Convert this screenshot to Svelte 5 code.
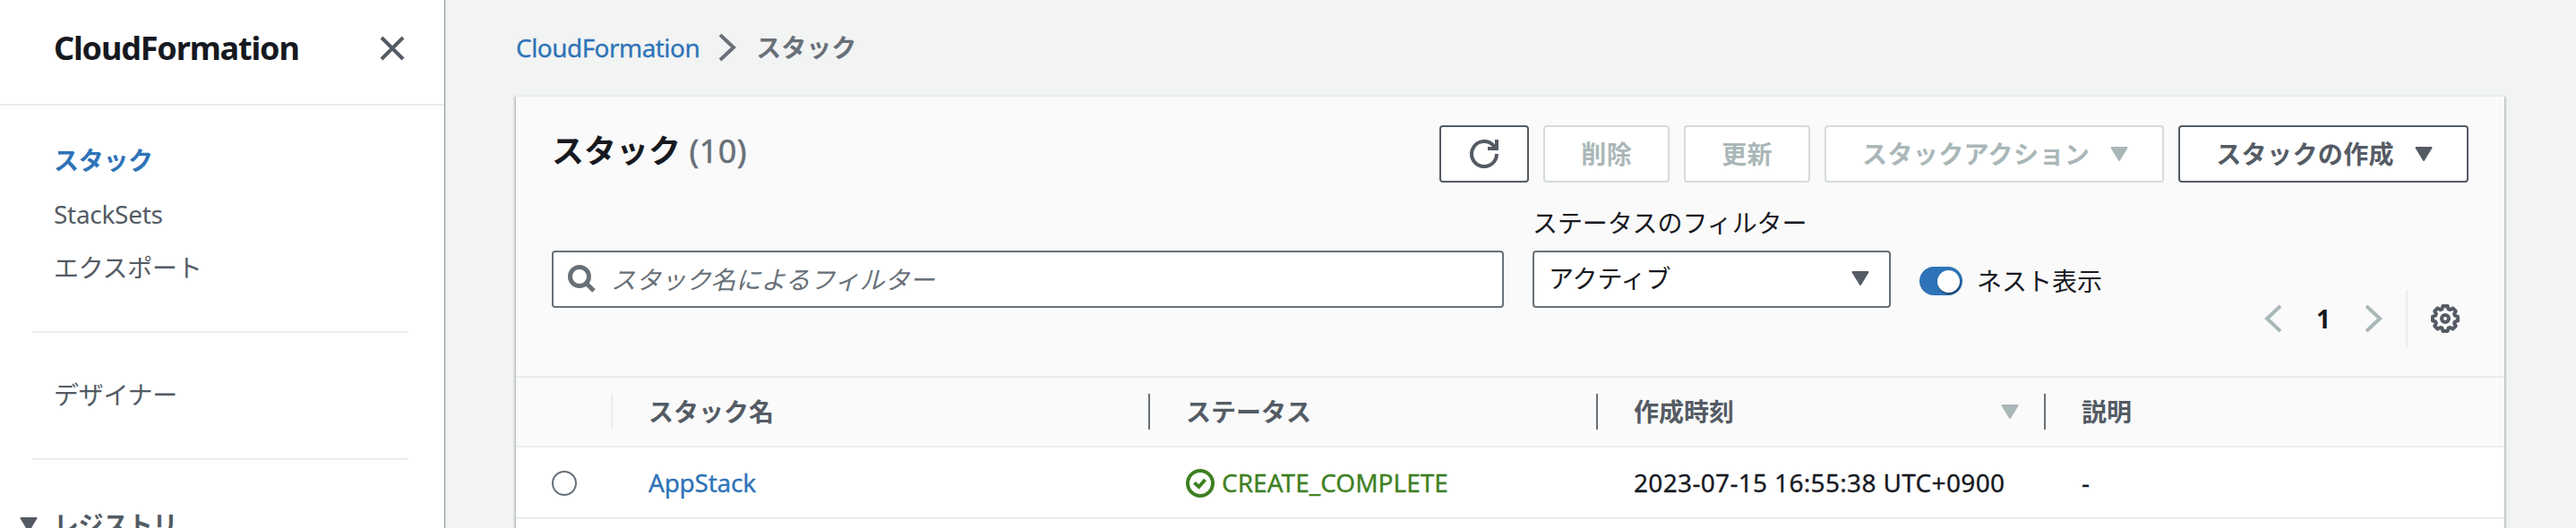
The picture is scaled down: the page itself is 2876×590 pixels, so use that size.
<script>
  let nested = true;
  let filterText = "";

  const navLinks = [
    { label: "スタック", active: true },
    { label: "StackSets" },
    { label: "エクスポート" },
  ];

  const stacks = [
    {
      name: "AppStack",
      status: "CREATE_COMPLETE",
      created: "2023-07-15 16:55:38 UTC+0900",
      description: "-",
    },
  ];
</script>

{#snippet caret()}
  <svg class="caret" viewBox="0 0 20 16">
    <path d="M1.5 1h17L10 15z" />
  </svg>
{/snippet}

<div class="page">
  <aside>
    <header>
      <h1>CloudFormation</h1>
      <svg class="close" viewBox="0 0 28 28">
        <path d="M2 2l24 24M26 2L2 26" />
      </svg>
    </header>
    <nav>
      {#each navLinks as link}
        <a href="#top" class:active={link.active}>{link.label}</a>
      {/each}
      <hr />
      <a href="#top">デザイナー</a>
      <hr />
      <div class="group">
        {@render caret()}
        <span>レジストリ</span>
      </div>
    </nav>
  </aside>

  <main>
    <div class="breadcrumb">
      <a href="#top">CloudFormation</a>
      <svg viewBox="0 0 20 32">
        <path d="M2 2l15 14L2 30" />
      </svg>
      <span>スタック</span>
    </div>

    <section>
      <div class="titlebar">
        <h2>スタック <span>(10)</span></h2>
        <div class="actions">
          <button class="refresh" aria-label="refresh">
            <svg viewBox="0 0 32 32">
              <path d="M30 16a14 14 0 1 1-3.500-9.200L29 10" />
              <path d="M30 0v10H20" />
            </svg>
          </button>
          <button disabled>削除</button>
          <button disabled>更新</button>
          <button class="menu" disabled>スタックアクション {@render caret()}</button>
          <button class="menu">スタックの作成 {@render caret()}</button>
        </div>
      </div>

      <div class="filters">
        <div class="search">
          <svg viewBox="0 0 32 32">
            <circle cx="13" cy="13" r="10.500" />
            <path d="M20.500 20.500L29 29" />
          </svg>
          <input bind:value={filterText} placeholder="スタック名によるフィルター" />
        </div>
        <div class="status-filter">
          <span>ステータスのフィルター</span>
          <div class="select">アクティブ {@render caret()}</div>
        </div>
        <button
          class="toggle"
          class:on={nested}
          aria-label="nested"
          on:click={() => (nested = !nested)}
        >
          <i></i>
        </button>
        <span class="toggle-label">ネスト表示</span>
        <div class="pagination">
          <svg class="arrow" viewBox="0 0 20 32">
            <path d="M18 2L3 16l15 14" />
          </svg>
          <b>1</b>
          <svg class="arrow" viewBox="0 0 20 32">
            <path d="M2 2l15 14L2 30" />
          </svg>
          <div class="settings">
            <svg viewBox="0 0 32 32">
              <path
                d="M13.400 2h5.200l.9 3.300 2 .8 3-1.700 3.300 3.300-1.700 3 .8 2 3.100.9v4.800l-3.100.9-.8 2 1.700 3-3.300 3.300-3-1.700-2 .8-.9 3.300h-5.200l-.9-3.300-2-.8-3 1.700-3.300-3.300 1.700-3-.8-2-3.100-.9v-4.800l3.100-.9.8-2-1.700-3 3.300-3.300 3 1.700 2-.8z"
              />
              <circle cx="16" cy="16" r="4" />
            </svg>
          </div>
        </div>
      </div>

      <div class="row head">
        <div class="cell"></div>
        <div class="cell">スタック名</div>
        <div class="cell">ステータス</div>
        <div class="cell sorted">作成時刻 {@render caret()}</div>
        <div class="cell">説明</div>
      </div>
      {#each stacks as stack}
        <div class="row">
          <div class="cell"><i class="radio"></i></div>
          <div class="cell"><a class="name" href="#top">{stack.name}</a></div>
          <div class="cell status">
            <svg viewBox="0 0 32 32">
              <circle cx="16" cy="16" r="14" />
              <path d="M9.500 15.500l5 4.500 7-8" />
            </svg>
            <span>{stack.status}</span>
          </div>
          <div class="cell created">{stack.created}</div>
          <div class="cell">{stack.description}</div>
        </div>
      {/each}
    </section>
  </main>
</div>

<style>
  :global(body) {
    margin: 0;
    overflow: hidden;
  }

  .page {
    display: flex;
    height: 590px;
    overflow: hidden;
    background: #f2f3f3;
    color: #16191f;
    font-family: "Noto Sans", "Noto Sans CJK JP", sans-serif;
    font-size: 28px;
    line-height: 40px;
  }

  .page * {
    box-sizing: border-box;
  }

  a {
    color: #2e73b8;
    text-decoration: none;
  }

  svg {
    display: block;
    flex: none;
    fill: none;
    stroke: #545b64;
    stroke-width: 4;
  }

  .caret {
    width: 20px;
    height: 16px;
    fill: #545b64;
    stroke-width: 2;
    stroke-linejoin: round;
  }

  aside {
    position: relative;
    width: 496px;
    flex: none;
    background: #fff;
    box-shadow: 1px 0 1px rgba(0, 28, 36, 0.4);
  }

  header {
    display: flex;
    justify-content: space-between;
    align-items: center;
    height: 118px;
    padding: 0 44px 8px 60px;
    border-bottom: 2px solid #eaeded;
  }

  h1 {
    margin: 0;
    font-size: 36px;
    letter-spacing: -1.15px;
  }

  .close {
    width: 28px;
    height: 28px;
  }

  nav {
    padding: 41px 40px 0 36px;
  }

  nav a {
    display: block;
    height: 60px;
    padding: 0 24px;
    line-height: 40px;
    letter-spacing: -0.3px;
    color: #545b64;
  }

  nav a.active {
    color: #2e73b8;
    font-weight: bold;
  }

  hr {
    height: 2px;
    margin: 31px 0 49px;
    border: 0;
    background: #eaeded;
  }

  .group {
    display: flex;
    align-items: center;
    margin: 52px 0 0 -14px;
    gap: 18px;
    font-weight: bold;
    letter-spacing: -0.4px;
    color: #545b64;
  }

  main {
    padding-left: 80px;
  }

  .breadcrumb {
    display: flex;
    align-items: center;
    height: 106px;
  }

  .breadcrumb a {
    letter-spacing: -0.55px;
    -webkit-text-stroke: 0.3px;
  }

  .breadcrumb svg {
    width: 20px;
    height: 32px;
    margin: 0 22px 0 21px;
    stroke: #687078;
  }

  .breadcrumb span {
    color: #687078;
    font-weight: bold;
  }

  section {
    width: 2220px;
    height: 500px;
    background: #fff;
    border-top: 2px solid #eaeded;
    box-shadow:
      0 2px 2px rgba(0, 28, 36, 0.3),
      2px 2px 2px rgba(0, 28, 36, 0.15),
      -2px 2px 2px rgba(0, 28, 36, 0.15);
  }

  .titlebar {
    display: flex;
    justify-content: space-between;
    height: 112px;
    padding: 32px 40px 0;
    background: #fafafa;
  }

  h2 {
    margin: 0;
    font-size: 36px;
    line-height: 58px;
  }

  h2 span {
    color: #687078;
    font-weight: normal;
    letter-spacing: 0.5px;
    -webkit-text-stroke: 0.5px;
  }

  .actions {
    display: flex;
    gap: 16px;
  }

  .actions button {
    display: flex;
    align-items: center;
    justify-content: space-between;
    height: 64px;
    padding: 0 40px;
    border: 2px solid #545b64;
    border-radius: 4px;
    background: #fff;
    color: #545b64;
    font: inherit;
    font-weight: bold;
    letter-spacing: 0.4px;
  }

  .actions .menu {
    gap: 23px;
    padding-right: 38px;
  }

  .actions button:disabled {
    border-color: #d5dbdb;
    color: #aab7b8;
  }

  .actions button:disabled .caret {
    fill: #aab7b8;
    stroke: #aab7b8;
  }

  .actions .refresh {
    padding: 0 32px;
  }

  .refresh svg {
    width: 32px;
    height: 32px;
  }

  .filters {
    display: flex;
    align-items: flex-end;
    height: 200px;
    padding: 0 40px 76px;
    background: #fafafa;
  }

  .search {
    display: flex;
    align-items: center;
    width: 1063px;
    height: 64px;
    padding: 0 16px;
    border: 2px solid #687078;
    border-radius: 4px;
    background: #fff;
  }

  .search svg {
    width: 32px;
    height: 32px;
    stroke: #687078;
    stroke-width: 5;
  }

  .search input {
    flex: 1;
    padding: 0 16px;
    border: 0;
    outline: 0;
    background: none;
    font: inherit;
    letter-spacing: -0.1px;
  }

  .search input::placeholder {
    color: #687078;
    font-style: italic;
    opacity: 1;
  }

  .status-filter {
    width: 400px;
    margin-left: 32px;
    letter-spacing: -0.1px;
  }

  .select {
    display: flex;
    align-items: center;
    justify-content: space-between;
    height: 64px;
    margin-top: 11px;
    padding: 0 22px 2px 16px;
    border: 2px solid #687078;
    border-radius: 4px;
    background: #fff;
  }

  .toggle {
    width: 48px;
    height: 32px;
    margin: 0 16px 14px 32px;
    padding: 3px;
    border: 0;
    border-radius: 16px;
    background: #687078;
  }

  .toggle.on {
    padding-left: 20px;
    background: #2e73b8;
  }

  .toggle i {
    display: block;
    width: 25px;
    height: 25px;
    border-radius: 50%;
    background: #fff;
    box-shadow: 1px 2px 2px rgba(0, 0, 0, 0.4);
  }

  .toggle-label {
    margin-bottom: 10px;
  }

  .pagination {
    display: flex;
    align-items: center;
    height: 64px;
    margin: 0 10px -44px auto;
  }

  .arrow {
    width: 20px;
    height: 32px;
    stroke: #aab7b8;
  }

  .pagination b {
    width: 92px;
    text-align: center;
  }

  .settings {
    display: flex;
    align-items: center;
    height: 64px;
    margin-left: 26px;
    padding-left: 26px;
    border-left: 2px solid #eaeded;
  }

  .settings svg {
    width: 32px;
    height: 32px;
    stroke-linejoin: round;
  }

  .row {
    display: grid;
    grid-template-columns: 108px 600px 500px 500px 1fr;
    align-items: center;
    height: 80px;
    border-bottom: 2px solid #eaeded;
    -webkit-text-stroke: 0.3px;
  }

  .cell {
    display: flex;
    align-items: center;
    height: 40px;
    padding-left: 40px;
  }

  .head {
    border-top: 2px solid #eaeded;
    background: #fafafa;
    color: #545b64;
    font-weight: bold;
    -webkit-text-stroke: 0;
  }

  .head .cell {
    border-right: 2px solid #687078;
  }

  .head .cell:first-child {
    border-color: #eaeded;
  }

  .head .cell:last-child {
    border: 0;
  }

  .sorted {
    justify-content: space-between;
    padding-right: 28px;
  }

  .sorted .caret {
    fill: #aab7b8;
    stroke: #aab7b8;
  }

  .radio {
    width: 28px;
    height: 28px;
    margin-top: 2px;
    border: 2px solid #687078;
    border-radius: 50%;
  }

  .name {
    letter-spacing: -0.25px;
  }

  .status {
    gap: 8px;
    color: #3e8022;
  }

  .status svg {
    width: 32px;
    height: 32px;
    margin-top: 2px;
    stroke: #3e8022;
  }

  .created {
    letter-spacing: 0.33px;
  }
</style>
